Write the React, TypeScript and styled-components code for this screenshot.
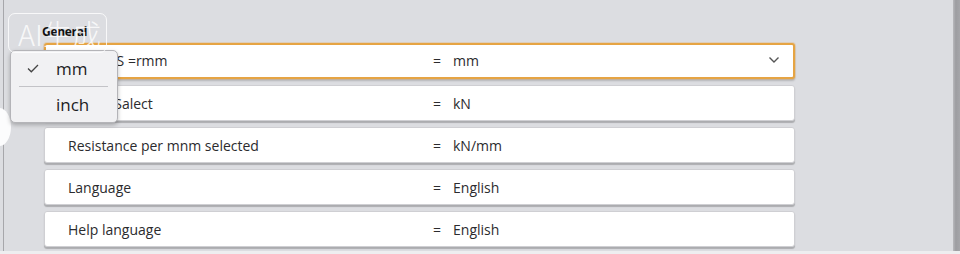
import React from "react";
import styled, { createGlobalStyle } from "styled-components";

const GlobalStyle = createGlobalStyle`
  html, body {
    margin: 0;
    padding: 0;
    background: #dcdde1;
  }
  body {
    font-family: "Open Sans", "Noto Sans", "Liberation Sans", sans-serif;
    color: #2b2b2e;
  }
`;

const Frame = styled.div`
  position: relative;
  width: 960px;
  height: 254px;
  overflow: hidden;
  box-sizing: border-box;
  background: #dcdde1;
  padding-left: 3px;
  border-bottom: 3px solid #eeeef0;
  display: flex;
`;

const LeftRule = styled.div`
  width: 1px;
  background: #a7a7ab;
  flex: none;
`;

const RightRule = styled.div`
  width: 7px;
  flex: none;
  background: linear-gradient(90deg, #b9b9bd 0, #9d9da1 40%, #a6a6aa 100%);
`;

const Content = styled.div`
  flex: 1;
  position: relative;
  padding: 24px 0 0 40px;
  display: flex;
  flex-direction: column;
`;

const SectionTitle = styled.div`
  font-size: 12px;
  font-weight: 700;
  line-height: 16px;
  height: 16px;
  margin: 0 0 3px -2px;
  letter-spacing: -0.3px;
  color: #111;
`;

const RowList = styled.div`
  display: flex;
  flex-direction: column;
  gap: 6px;
  width: 751px;
`;

const Row = styled.div<{ $active?: boolean }>`
  height: 36px;
  box-sizing: border-box;
  background: #fff;
  border-radius: 3px;
  border: ${(p) => (p.$active ? "2px solid #e6a443" : "1px solid #cfcfd3")};
  box-shadow: ${(p) =>
    p.$active
      ? "0 0 0 1px rgba(230,164,67,0.25), 0 2px 2px rgba(0,0,0,0.18)"
      : "0 2px 1px rgba(0,0,0,0.22)"};
  display: grid;
  grid-template-columns: 365px 1fr 40px;
  align-items: center;
  padding-left: ${(p) => (p.$active ? "22px" : "23px")};
  padding-bottom: ${(p) => (p.$active ? "2px" : "0")};
  font-size: 14px;
`;

const Label = styled.span`
  white-space: nowrap;
  overflow: hidden;
`;

const Value = styled.span`
  display: flex;
  gap: 12px;
  white-space: nowrap;
`;

const Chevron = styled.svg`
  width: 12px;
  height: 8px;
  justify-self: center;
  margin-left: 2px;
`;

const Popup = styled.div`
  position: absolute;
  left: 10px;
  top: 50px;
  width: 108px;
  box-sizing: border-box;
  background: #f1f1f3;
  border: 1px solid #b4b4b8;
  border-radius: 5px;
  box-shadow: 0 2px 4px rgba(0, 0, 0, 0.25);
  display: flex;
  flex-direction: column;
  z-index: 2;
`;

const PopupItem = styled.div`
  height: 35px;
  display: flex;
  align-items: center;
  padding-left: 45px;
  position: relative;
  font-size: 17px;
  color: #1c1c1e;
`;

const PopupDivider = styled.div`
  height: 1px;
  background: #c3c3c7;
  margin: 0 9px 0 8px;
`;

const Check = styled.svg`
  position: absolute;
  left: 16px;
  top: 13px;
  width: 12px;
  height: 9px;
`;

const Knob = styled.div`
  position: absolute;
  left: -13px;
  top: 108px;
  width: 24px;
  height: 38px;
  border-radius: 50%;
  background: #fcfcfd;
  z-index: 1;
`;

const Watermark = styled.div`
  position: absolute;
  left: 8px;
  top: 13px;
  width: 99px;
  height: 40px;
  box-sizing: border-box;
  border: 1.5px solid rgba(255, 255, 255, 0.8);
  border-radius: 7px;
  display: flex;
  align-items: center;
  padding-left: 9px;
  font-family: "Noto Sans CJK SC", "Noto Sans", sans-serif;
  font-size: 29px;
  font-weight: 300;
  color: rgba(255, 255, 255, 0.8);
  z-index: 3;
  pointer-events: none;
`;

const rows = [
  { label: "Length S =rmm", value: "mm", active: true },
  { label: "Forces Salect", value: "kN" },
  { label: "Resistance per mnm selected", value: "kN/mm" },
  { label: "Language", value: "English" },
  { label: "Help language", value: "English" },
];

export default function App() {
  return (
    <>
      <GlobalStyle />
      <Frame>
        <LeftRule />
        <Content>
          <SectionTitle>General</SectionTitle>
          <RowList>
            {rows.map((r) => (
              <Row key={r.label} $active={r.active}>
                <Label>{r.label}</Label>
                <Value>
                  <span>=</span>
                  <span>{r.value}</span>
                </Value>
                {r.active && (
                  <Chevron viewBox="0 0 12 8">
                    <path d="M1.5 1.5 L6 6 L10.5 1.5" fill="none" stroke="#555" strokeWidth="1.4" />
                  </Chevron>
                )}
              </Row>
            ))}
          </RowList>
        </Content>
        <RightRule />
        <Popup>
          <PopupItem>
            <Check viewBox="0 0 12 9">
              <path d="M1 4.5 L4.3 7.8 L11 1" fill="none" stroke="#444" strokeWidth="1.3" />
            </Check>
            mm
          </PopupItem>
          <PopupDivider />
          <PopupItem>inch</PopupItem>
        </Popup>
        <Knob />
        <Watermark>AI生成</Watermark>
      </Frame>
    </>
  );
}
